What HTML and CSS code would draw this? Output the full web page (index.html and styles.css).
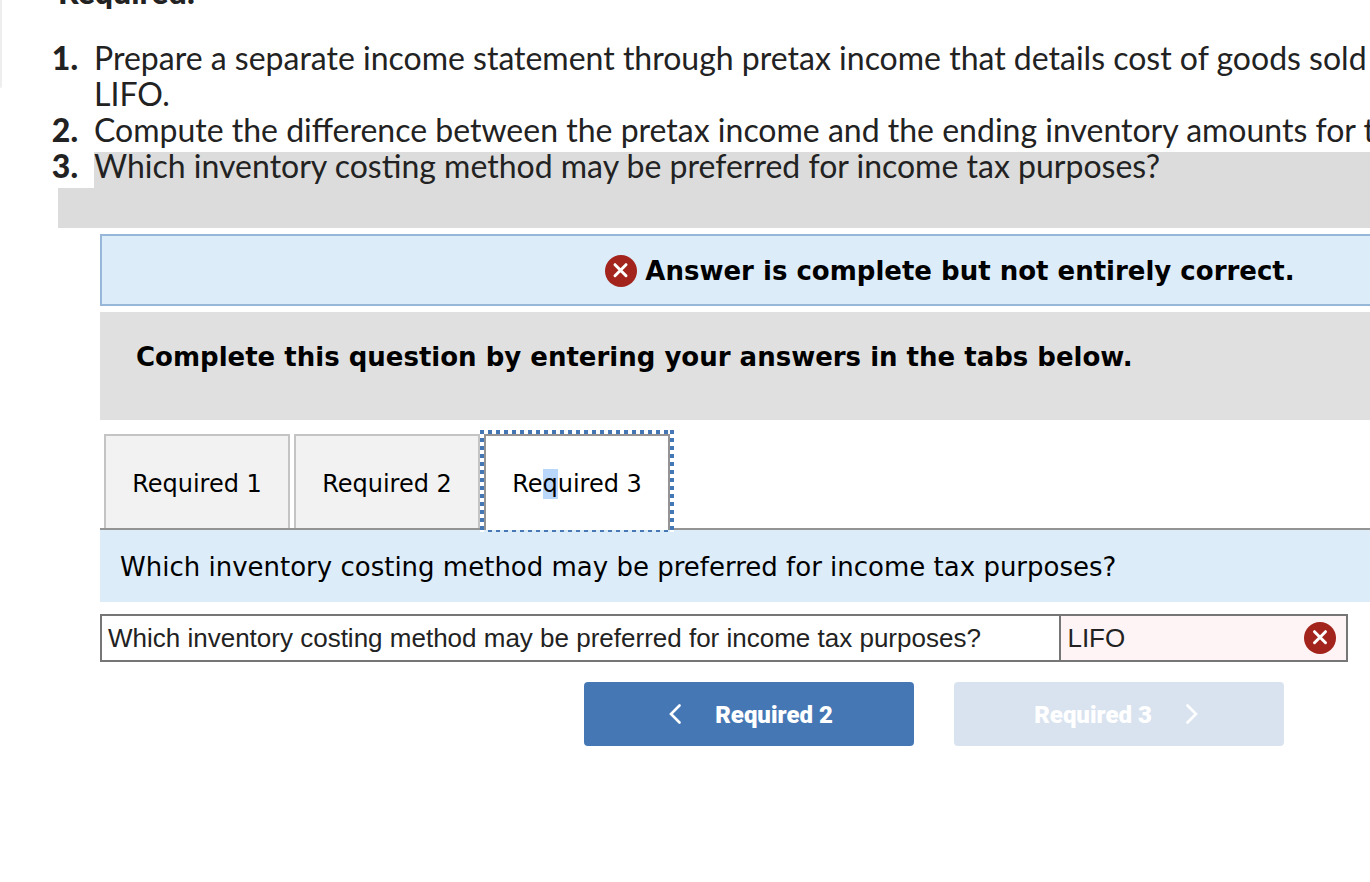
FILE: index.html
```html
<!DOCTYPE html>
<html lang="en">
<head>
  <meta charset="UTF-8">
  <title>Required 3</title>
  <link rel="stylesheet" href="styles.css">
</head>
<body>

  <div class="side-handle"></div>

  <section class="prompt">
    <h2>Required:</h2>
    <ol>
      <li>Prepare a separate income statement through pretax income that details cost of goods sold<br>LIFO.</li>
      <li>Compute the difference between the pretax income and the ending inventory amounts for t</li>
      <li class="marked">Which inventory costing method may be preferred for income tax purposes?</li>
    </ol>
    <div class="marked-gap"></div>
  </section>

  <main class="question">
    <div class="banner wide">
      <svg class="wrong" viewBox="0 0 32 32" role="img" aria-label="Incorrect">
        <circle cx="16" cy="16" r="16" fill="#a3241d"/>
        <path d="M10 9.700 21 20.700M21 9.700 10 20.700" stroke="#fff" stroke-width="3" stroke-linecap="round"/>
      </svg>
      <strong>Answer is complete but not entirely correct.</strong>
    </div>

    <div class="instructions wide">Complete this question by entering your answers in the tabs below.</div>

    <div class="tabs wide" role="tablist">
      <button class="tab" role="tab">Required 1</button>
      <button class="tab" role="tab">Required 2</button>
      <button class="tab active" role="tab" aria-selected="true"><span>Re<mark>q</mark>uired 3</span></button>
    </div>

    <div class="tab-title wide">Which inventory costing method may be preferred for income tax purposes?</div>

    <table class="answers">
      <tr>
        <td class="label">Which inventory costing method may be preferred for income tax purposes?</td>
        <td class="answer">
          <div class="answer-box">
            <span>LIFO</span>
            <svg class="wrong" viewBox="0 0 32 32" role="img" aria-label="Incorrect">
              <circle cx="16" cy="16" r="16" fill="#a3241d"/>
              <path d="M10.500 9.700 21.500 20.700M21.500 9.700 10.500 20.700" stroke="#fff" stroke-width="3" stroke-linecap="round"/>
            </svg>
          </div>
        </td>
      </tr>
    </table>

    <nav class="pager">
      <button class="prev">
        <svg viewBox="0 0 12 20"><path d="M10.500 1.500 2 10 10.500 18.500"/></svg>
        <span>Required 2</span>
      </button>
      <button class="next" disabled>
        <span>Required 3</span>
        <svg viewBox="0 0 12 20"><path d="M1.500 1.500 10 10 1.500 18.500"/></svg>
      </button>
    </nav>
  </main>

</body>
</html>
```
FILE: styles.css
```css
* {
  box-sizing: border-box;
}

body {
  margin: 0;
  background: #fff;
  color: #000;
  font-family: Verdana, "DejaVu Sans", sans-serif;
  font-size: 26px;
  overflow: hidden;
}

.side-handle {
  position: absolute;
  top: 0;
  left: 0;
  width: 2px;
  height: 88px;
  background: #eee;
  border-bottom-right-radius: 2px;
}

/* prompt text above the question */
.prompt {
  margin-top: -26px;
  padding-left: 58px;
  font-family: "Proxima Nova", Lato, sans-serif;
  font-size: 32px;
  line-height: 36px;
  color: #222;
}

.prompt h2 {
  margin: 0 0 30px;
  font-size: 32px;
  font-weight: 900;
}

.prompt ol {
  margin: 0;
  padding: 0 0 0 36px;
  list-style: none;
  counter-reset: step;
  white-space: nowrap;
}

.prompt li {
  counter-increment: step;
}

.prompt li::before {
  content: counter(step) ".";
  display: inline-block;
  box-sizing: border-box;
  width: 60px;
  margin-left: -60px;
  padding-right: 16px;
  text-align: right;
  font-weight: 900;
}

.marked {
  padding-bottom: 4px;
  background: linear-gradient(#dcdcdc, #dcdcdc) 0 4px no-repeat;
}

.marked-gap {
  height: 40px;
  background: #dcdcdc;
}

/* question */
.question {
  padding: 6px 0 0 100px;
}

.wide {
  margin-right: -430px;
}

.wrong {
  display: block;
  width: 32px;
  height: 32px;
  fill: none;
  flex: none;
}

.banner {
  display: flex;
  align-items: center;
  justify-content: center;
  gap: 8px;
  height: 72px;
  padding-top: 2px;
  border: 2px solid #97b7d8;
  background: #ddecf9;
}

.instructions {
  margin-top: 6px;
  padding: 29px 36px 47px;
  background: #e0e0e0;
  font-weight: 700;
  line-height: 32px;
}

.tabs {
  display: flex;
  gap: 4px;
  margin-top: 14px;
  padding-left: 4px;
  border-bottom: 2px solid #949494;
}

.tab {
  width: 186px;
  height: 94px;
  padding: 4px 0 0;
  border: 2px solid #c4c4c4;
  border-bottom: 0;
  background: #f2f2f2;
  color: #000;
  font-family: inherit;
  font-size: 24px;
}

.tab.active {
  position: relative;
  height: 96px;
  margin-bottom: -2px;
  padding-top: 2px;
  border-color: #949494;
  background: #fff;
}

/* square dotted focus ring */
.tab.active::after {
  content: "";
  position: absolute;
  inset: -6px -6px -2px;
  background:
    repeating-linear-gradient(#4577b5 0 4px, #fff 4px 8px) 0 0 / 4px 100% no-repeat,
    repeating-linear-gradient(#4577b5 0 4px, #fff 4px 8px) 100% 0 / 4px 100% no-repeat,
    repeating-linear-gradient(90deg, #4577b5 0 4px, #fff 4px 8px) 0 0 / 100% 4px no-repeat,
    repeating-linear-gradient(90deg, #4577b5 0 4px, #ddecf9 4px 8px) 0 100% / 100% 2px no-repeat;
}

.tab mark {
  padding: 1px 0;
  background: #b9d6fb;
  color: inherit;
}

.tab-title {
  padding: 21px 20px 19px;
  background: #ddecf9;
  line-height: 32px;
}

.answers {
  width: calc(100% - 22px);
  margin-top: 12px;
  border-collapse: collapse;
  font-family: Arial, "Liberation Sans", sans-serif;
  font-size: 26px;
  color: #222;
}

.answers td {
  height: 46px;
  padding: 0 6px;
  border: 2px solid #767676;
}

.answers .answer {
  width: 23%;
  padding-right: 10px;
  background: #fef4f5;
}

.answer-box {
  display: flex;
  align-items: center;
  justify-content: space-between;
}

.pager {
  display: flex;
  justify-content: center;
  gap: 40px;
  margin: 20px -398px 0 0;
}

.pager button {
  display: flex;
  align-items: center;
  justify-content: center;
  gap: 34px;
  width: 330px;
  height: 64px;
  padding: 0;
  border: 0;
  border-radius: 4px;
  background: #4577b5;
  color: #fff;
  font-family: Roboto, sans-serif;
  font-size: 24px;
  font-weight: 900;
}

.pager span {
  padding-top: 2px;
}

.pager .prev {
  padding-left: 4px;
}

.pager .next {
  padding-right: 6px;
  background: #d9e3ef;
}

.pager svg {
  width: 12px;
  height: 20px;
  fill: none;
  stroke: #fff;
  stroke-width: 2.6;
  stroke-linecap: round;
}
```
